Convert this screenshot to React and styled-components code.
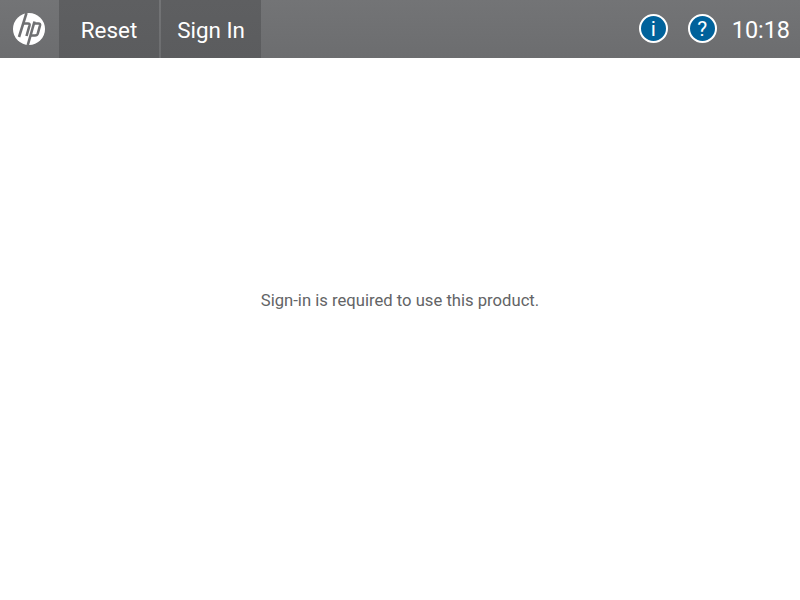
import React from 'react';
import styled, { createGlobalStyle } from 'styled-components';

const GlobalStyle = createGlobalStyle`
    html, body {
        margin:0;
        padding:0;
        background:#fff;
    }
`

const Page = styled.div`
    width:800px;
    height:600px;
    display:flex;
    flex-direction:column;
    font-family:Roboto, "Liberation Sans", sans-serif;
    overflow:hidden;
`

const Toolbar = styled.header`
    height:58px;
    flex:none;
    display:flex;
    align-items:stretch;
    background:linear-gradient(#737476, #6c6d6f);
`

const LogoSlot = styled.div`
    width:58px;
    margin-right:1px;
    display:flex;
    align-items:center;
    justify-content:center;
`

const ToolButton = styled.div`
    width:100px;
    margin-right:2px;
    padding-top:2px;
    box-sizing:border-box;
    display:flex;
    align-items:center;
    justify-content:center;
    background:linear-gradient(#5e5f61, #5b5c5e);
    color:#fff;
    font-size:22.4px;
`

const Status = styled.div`
    margin-left:auto;
    display:flex;
    align-items:center;
    padding-right:10px;
`

const HelpIcon = styled.div`
    width:29px;
    height:29px;
    box-sizing:border-box;
    margin:0 20px 1px 0;
    border:2px solid #fff;
    border-radius:50%;
    background:#00629b;
    color:#fff;
    display:flex;
    align-items:center;
    justify-content:center;
    font-size:21px;
`

const Clock = styled.div`
    color:#fff;
    font-size:23.4px;
    margin-left:-5px;
    padding-top:2px;
`

const Content = styled.main`
    flex:1;
    display:flex;
    align-items:center;
    justify-content:center;
    padding-bottom:58px;
    color:#636466;
    font-size:16.65px;
`

const HpLogo = () => (
    <svg width="34" height="34" viewBox="12 12 34 34">
        <circle cx="29" cy="29" r="16" fill="#fff" />
        <g fill="none" stroke="#6f7072" strokeWidth="2.6">
            <path d="M26.5 13 L19 37" />
            <path d="M23 23.5 H28 Q30 23.5 29.5 25.5 L26.5 36" />
            <path d="M34.5 21.5 L27.8 45" />
            <path d="M34 23.5 H38.5 Q40.5 23.5 40 25.5 L37.8 33.5 Q37.2 35.5 35 35.5 H31" />
        </g>
    </svg>
)

const App = () => {
    return(
        <Page>
            <GlobalStyle />
            <Toolbar>
                <LogoSlot><HpLogo /></LogoSlot>
                <ToolButton>Reset</ToolButton>
                <ToolButton>Sign In</ToolButton>
                <Status>
                    <HelpIcon>i</HelpIcon>
                    <HelpIcon>?</HelpIcon>
                    <Clock>10:18</Clock>
                </Status>
            </Toolbar>
            <Content>Sign-in is required to use this product.</Content>
        </Page>
    )
};

export default App;
